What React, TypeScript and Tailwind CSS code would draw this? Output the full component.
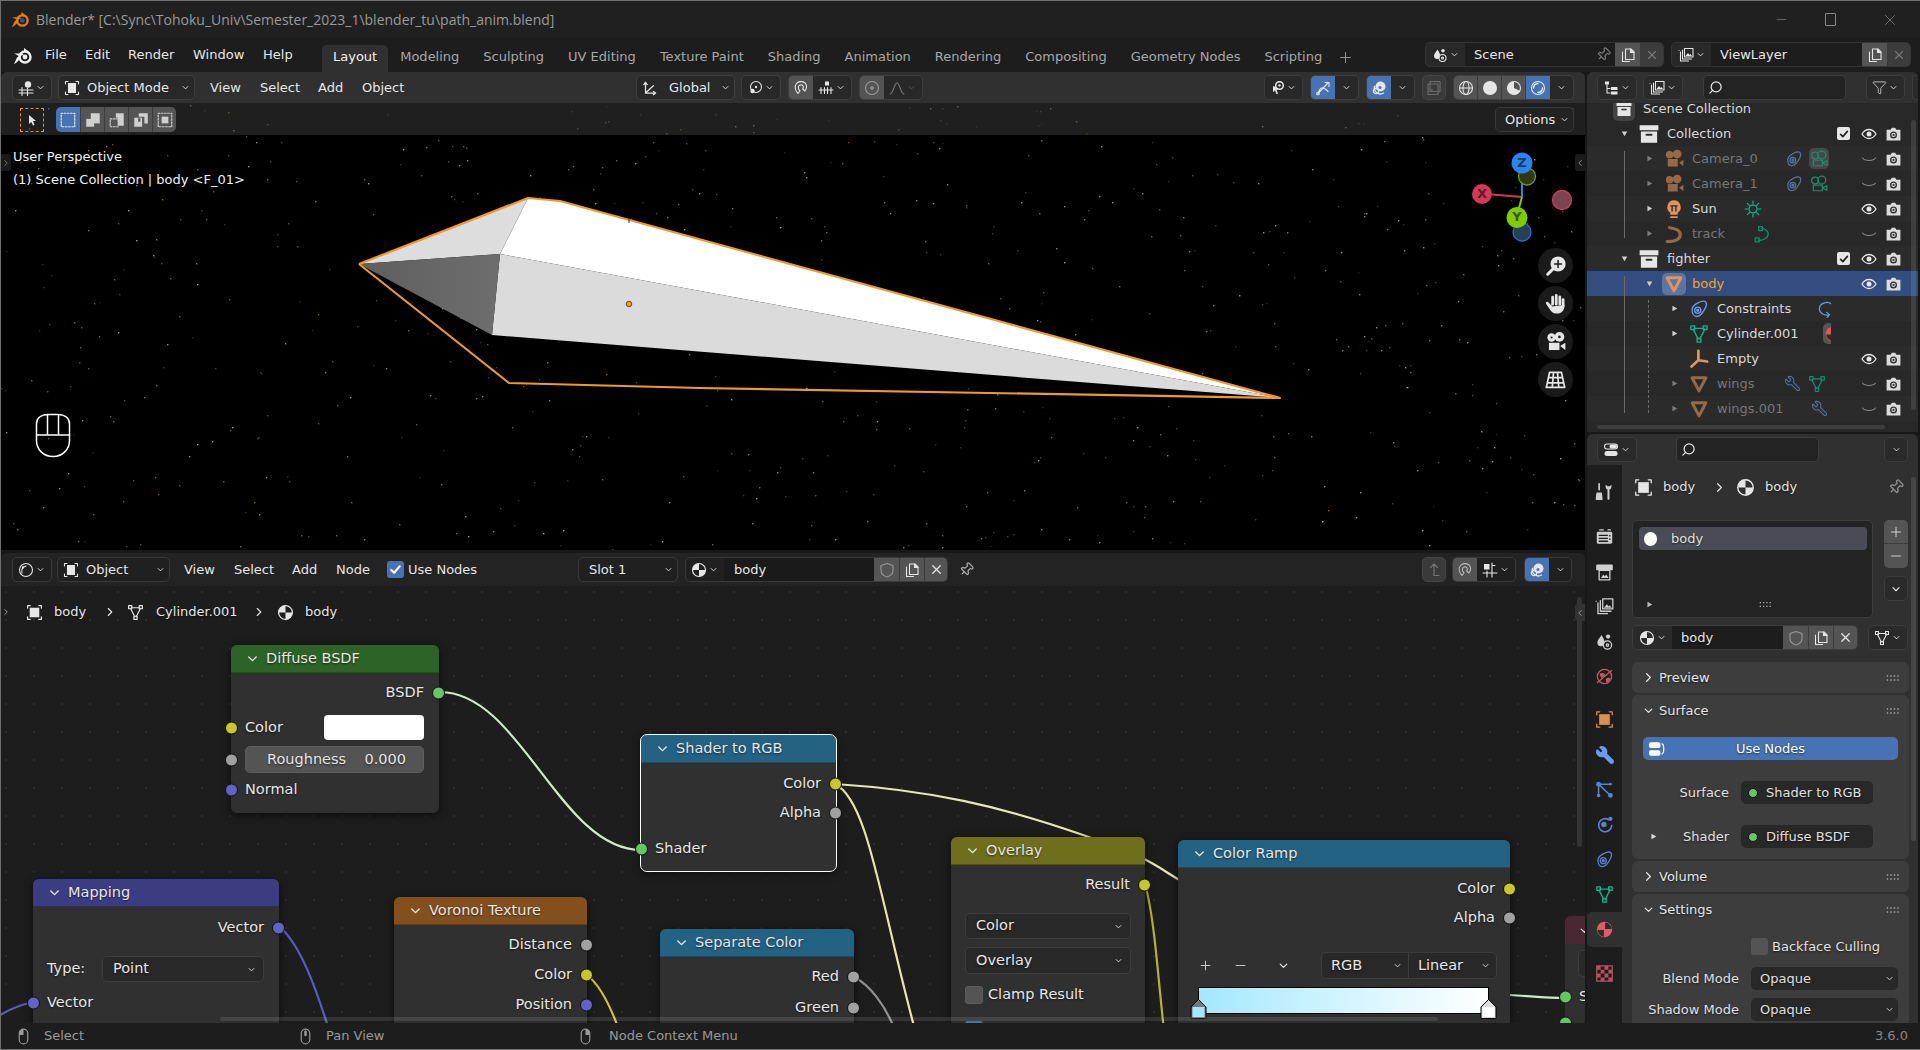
import React from "react";
import { Wrench, Pin, Search, Funnel, X, Plus, Minus } from "lucide-react";
import { twMerge } from "tailwind-merge";

const F = "currentColor";
const icons: Record<string, React.ReactNode> = {
  view3d: (<><path d="M1 10h14M1 13h14M4 7.500v8M9.500 8v7.500" /><circle cx="10" cy="4.500" r="3.200" fill={F} stroke="none" /></>),
  objmode: (<><path d="M1.500 4V1.500H4M12 1.500h2.500V4M14.500 12v2.500H12M4 14.500H1.500V12" /><rect x="4.500" y="3.500" width="7" height="9" fill={F} /></>),
  objsq: (<><path d="M1.500 4V1.500H4M12 1.500h2.500V4M14.500 12v2.500H12M4 14.500H1.500V12" /><rect x="3.500" y="3.500" width="9" height="9" fill={F} stroke="none" /></>),
  selset: <rect x="2" y="2" width="12" height="12" strokeDasharray="1.400 1.400" />,
  selext: (<><rect x="2" y="7" width="7" height="7" fill={F} stroke="none" /><rect x="6" y="2" width="8" height="9" fill={F} stroke="none" /></>),
  selsub: (<><rect x="2" y="7" width="7" height="7" strokeDasharray="1.400 1.400" /><path d="M7 2h7v11H9V6H7z" fill={F} stroke="none" /></>),
  seldif: (<><path d="M6 2h8v9h-3V5H6z" fill={F} stroke="none" /><path d="M2 6h7v8H2z" fill={F} stroke="none" /><rect x="5.500" y="6.500" width="2" height="3" fill="#545454" stroke="none" /></>),
  selint: (<><rect x="2" y="2" width="12" height="12" strokeDasharray="1.400 1.400" /><rect x="5" y="5" width="6" height="6" fill={F} stroke="none" /></>),
  cursor: <path d="M5 3l7 6H9l1.500 4-1.500.6L7.300 10 5 12z" fill={F} stroke="none" />,
  axes: (<><path d="M4 3v9.500h9M4 3L2.500 5M4 3l1.500 2M13 12.500L11 11M13 12.500L11 14M4 12.500L11 6" /></>),
  pivot: (<><circle cx="9" cy="7" r="5.500" /><circle cx="5.500" cy="11" r="2.200" fill={F} stroke="none" /><circle cx="9" cy="7" r="1.200" fill={F} stroke="none" /></>),
  magnet: <path d="M5 13.500l2-2.500C5.500 9.500 5 8 5.500 6.500 6.200 5 8 4.500 9.300 5.200c1.300.8 1.300 2.600.4 3.800l2.200 2C14 8.500 14.200 5 12 3 9.500 1 5.500 1.200 3.500 3.500 1.300 6.300 2 10.700 5 13.500z" />,
  snapinc: (<><rect x="7" y="1.500" width="4" height="4" fill={F} stroke="none" /><path d="M1 10h14M3 7.500v6M6.500 7.500v6M9.500 7.500v6M13 7.500v6" /></>),
  snapgrid: (<><rect x="2" y="2" width="5.500" height="5.500" fill={F} stroke="none" /><path d="M10 1v14M1 11h14M13 3.500H10M5 9v6" /></>),
  prop: (<><circle cx="8" cy="8" r="6.500" /><circle cx="8" cy="8" r="1.800" fill={F} stroke="none" /></>),
  falloff: <path d="M1 14c3.500 0 4-11 7-11s3.500 11 7 11" />,
  scene: (<><path d="M5.500 2.500C3.500 5.500 2 7 2 9c0 2 1.500 3 3 3 1 0 2-.5 2.500-1.500 1-2 .5-3 0-4.500z" fill={F} stroke="none" /><circle cx="11" cy="3.800" r="1.800" fill={F} stroke="none" /><circle cx="10.500" cy="11" r="3.500" /><circle cx="10.500" cy="11" r="1" /></>),
  layers: (<><path d="M2.500 5v9h8M1 3.500v0" /><path d="M4.500 3v9h9" /><rect x="6.500" y="1.500" width="8.500" height="8.500" /><path d="M7.500 9l2.500-3 1.500 2 1-1 1.500 2z" fill={F} stroke="none" /></>),
  dup: (<><path d="M2.500 5v9.500h7" /><path d="M5.500 2h5.500l3 3v7.500h-8.500z" /><path d="M10.500 2v3.500h3.500" fill={F} /></>),
  shield: <path d="M8 1.500l6 2v5c0 3-3 5.500-6 6.500-3-1-6-3.500-6-6.500v-5z" />,
  check: <path d="M3.500 8.500l3 3 6-7" strokeWidth="2.200" />,
  eye: (<><path d="M1 8s2.700-4.500 7-4.500S15 8 15 8s-2.700 4.500-7 4.500S1 8 1 8z" strokeWidth="1.300" /><circle cx="8" cy="8" r="2.500" fill={F} stroke="none" /></>),
  eyeoff: <path d="M1.500 7c2.500 3.300 10.500 3.300 13 0" />,
  snap: (<><path d="M1.500 4.500h3.800l1.200-2h3l1.200 2h3.800v10h-13z" fill={F} stroke="none" /><circle cx="8" cy="9.300" r="3.300" fill="#333" stroke="none" /><circle cx="8" cy="9.300" r="2" fill={F} stroke="none" /><circle cx="8" cy="9.300" r="1" fill="#333" stroke="none" /></>),
  coll: (<><rect x="0.500" y="1" width="15" height="4" fill={F} stroke="none" /><rect x="1.500" y="6" width="13" height="9" fill={F} stroke="none" /><path d="M6 8.500h4" stroke="#2b2b2b" strokeWidth="1.600" /></>),
  camobj: (<><circle cx="4.500" cy="4.500" r="3" fill={F} stroke="none" /><circle cx="10.500" cy="4" r="3.500" fill={F} stroke="none" /><rect x="3" y="8" width="8" height="6" fill={F} stroke="none" /><path d="M12 11l3.500-2.500v5z" fill={F} stroke="none" /></>),
  camdata: (<><circle cx="4.500" cy="4.800" r="3" /><circle cx="10.500" cy="4.500" r="3.500" /><rect x="3" y="9" width="8" height="5" /><path d="M12 11l3-1.500v4L12 12z" /></>),
  bulb: (<><path d="M8 1a5.500 5.500 0 0 0-3 10v1.500h6V11A5.500 5.500 0 0 0 8 1z" fill={F} stroke="none" /><path d="M5.500 14.500h5" strokeWidth="1.300" /><path d="M5.500 5.500h5M6.500 5.500v4M9.500 5.500v4" stroke="#2b2b2b" /></>),
  sun: (<><circle cx="8" cy="8" r="3.500" /><path d="M8 1v2.500M8 12.500V15M1 8h2.500M12.500 8H15M3 3l1.800 1.800M11.200 11.200L13 13M3 13l1.800-1.800M11.200 4.800L13 3" /></>),
  curve: <path d="M2.500 14C9 14 13 12 13 8.500 13 5.500 9 3.500 4.500 3" strokeWidth="2.600" />,
  curvedata: (<><path d="M4.500 13.500C9 14 13.500 11.500 13.500 8 13.500 5 10 3 7.500 3" /><rect x="2" y="11.500" width="3.500" height="3.500" /><rect x="5" y="1.500" width="3.500" height="3.500" /></>),
  meshobj: <path d="M2.500 3h11L8 13.500z" strokeWidth="2.400" />,
  meshdata: (<><path d="M4 3.500h8M3.500 4.500l3.800 7.500M12.500 4.500l-3.800 7.500" /><rect x="1.500" y="1.500" width="3" height="3" /><rect x="11.500" y="1.500" width="3" height="3" /><rect x="6.500" y="11.500" width="3" height="3" /></>),
  empty: <path d="M7.500 9V1.500M7.500 9L2 14M7.500 9l7 1" strokeWidth="2.200" />,
  constraint: (<><path d="M2.500 8.500C2.500 5 9 1.500 12 1.700c2.300.2 2.300 3 1.300 5C11.500 10.500 9.500 14 6 14 3.800 14 2.500 11.500 2.500 8.500z" /><circle cx="7" cy="9" r="2.500" /><circle cx="7" cy="9" r=".8" fill={F} /></>),
  conschild: <path d="M13.500 3.500C9.500.5 3 3 3 8c0 3.500 4 6 8 5.300M9.500 11l2.500 2-2 2.500" />,
  matall: (<><circle cx="8" cy="8" r="6.500" fill="none" strokeWidth="1.200" /><path d="M8 1.500A6.500 6.500 0 0 0 1.500 8H8zM8 8v6.500A6.500 6.500 0 0 0 14.500 8z" fill={F} stroke="none" /></>),
  matfull: (<><circle cx="8" cy="8" r="6.500" fill={F} stroke="none" /><path d="M8.500 2A6 6 0 0 1 14 7.500H8.500zM7.500 8.500V14A6 6 0 0 1 2 8.500z" fill="#2b2b2b" stroke="none" /></>),
  toolt: (<><path d="M3.500 1.500v5M1.800 9.500h3.400l.5 5h-4.400z" fill={F} strokeWidth="1.400" /><path d="M9 2v2.500c0 1 .8 1.800 1.500 1.800v8c0 .9 1.700.9 1.700 0v-8c.8 0 1.600-.8 1.600-1.800V2L12.500 3.500h-2z" fill={F} stroke="none" /></>),
  render: (<><rect x="1.500" y="4" width="13" height="10" rx="1.200" fill={F} stroke="none" /><path d="M4 2.500h3M11 2.500h2" /><path d="M3.500 7h7M3.500 9.500h7M3.500 12h7" stroke="#1d1d1d" /><path d="M12.500 7v.5M12.500 10v.5" stroke="#1d1d1d" /></>),
  output: (<><rect x="1" y="2" width="14" height="5" rx="1" fill={F} stroke="none" /><rect x="3.500" y="7" width="9" height="8" fill="#1d1d1d" stroke={F} /><path d="M5 13.500l2-3 1.300 1.500 1.200-1.500 2 3z" fill={F} stroke="none" /></>),
  worldt: (<><circle cx="8" cy="8" r="6" /><path d="M2 13L14 3" /><path d="M4 5.500c2-1 4-.5 4.500 1-.5 2-2 1-2.500 3-1-.5-2-2-2-4zM9 10c1-1 3-1.500 4-.5-.5 2-2 3.500-3.500 3.500z" fill={F} stroke="none" /></>),
  particles: (<><circle cx="3" cy="3.500" r="2" fill={F} stroke="none" /><circle cx="3" cy="13" r="1.500" fill={F} stroke="none" /><circle cx="13" cy="3.500" r="1.200" fill={F} stroke="none" /><circle cx="13" cy="13" r="2" fill={F} stroke="none" /><path d="M3 3.500v9M3 3.500h10M3 3.500l10 9.500" strokeWidth="1.300" /></>),
  physics: (<><path d="M11.500 4A5.500 5.500 0 1 0 14 9" strokeWidth="1.400" /><circle cx="7.500" cy="8" r="2.300" fill={F} stroke="none" /><circle cx="13" cy="3.200" r="1.800" fill={F} stroke="none" /></>),
  texture: (<><rect x="1.500" y="1.500" width="13" height="13" /><path d="M1.500 1.500h3.300v3.300H1.500zM8 1.500h3.300v3.300H8zM4.800 4.800H8V8H4.800zM11.300 4.800h3.200V8h-3.200zM1.500 8h3.300v3.300H1.500zM8 8h3.300v3.300H8zM4.800 11.300H8v3.200H4.800zM11.300 11.300h3.200v3.200h-3.200z" fill={F} stroke="none" /></>),
  toggle: (<><rect x="1.500" y="2" width="13" height="5" rx="2.500" fill="none" /><rect x="6.500" y="2.500" width="7.500" height="4" rx="2" fill={F} stroke="none" /><rect x="1.500" y="9" width="13" height="5" rx="2.500" fill={F} stroke="none" /></>),
  outmode: (<><rect x="2" y="1.500" width="4" height="3" fill={F} stroke="none" /><path d="M4 4.500v8.500h3M4 8.500h3" /><rect x="8" y="7" width="6.500" height="3" fill={F} stroke="none" /><rect x="8" y="11.500" width="6.500" height="3" fill={F} stroke="none" /></>),
  nodeed: (<><circle cx="8" cy="8" r="6.500" /><path d="M4 11c-.8-3.500.5-6 4-7" /><circle cx="5" cy="5.500" r=".6" fill={F} /></>),
  arrowup: <path d="M8 2L4.500 5.500M8 2l3.500 3.500M8 2v11.500h5" />,
  gizmo: (<><path d="M3 13.500L13 3M3 13.500c2-6 4-8 10-2" /><circle cx="3" cy="13.500" r="1.300" /><path d="M10 2.500h4v4" /></>),
  overlay: (<><circle cx="9.500" cy="6.500" r="5" fill={F} stroke="none" /><path d="M3.500 6.500a6 6 0 0 0 9 6.500" strokeWidth="1.400" /><circle cx="5" cy="11" r="2.700" fill="none" strokeWidth="1.200" /><circle cx="9" cy="7.500" r="1.500" fill="#4772b3" stroke="none" /></>),
  visib: (<><circle cx="9.500" cy="5.500" r="3.800" fill="none" strokeWidth="1.500" /><circle cx="9.500" cy="5.500" r="1.200" fill={F} stroke="none" /><path d="M3 6l6 2.500-2.500 1.200 1.500 4-1.500.6-1.500-4-2 2z" fill={F} stroke="none" /></>),
  xray: (<><rect x="4" y="1.500" width="10" height="10" /><rect x="2" y="4" width="10" height="10.500" /><path d="M6 9v1.500" /></>),
  wire: (<><circle cx="8" cy="8" r="6.500" /><ellipse cx="8" cy="8" rx="3" ry="6.500" /><path d="M1.500 8h13" /></>),
  solid: <circle cx="8" cy="8" r="7" fill={F} stroke="none" />,
  matprev: (<><circle cx="8" cy="8" r="6.500" /><path d="M8 1.500A6.500 6.500 0 0 0 8 14.500 6.500 6.500 0 0 0 14 11L8 8z" fill={F} stroke="none" /></>),
  rendered: (<><circle cx="8" cy="8" r="6.500" /><path d="M3.500 8A4.500 4.500 0 0 1 8 3.500M12.500 8A4.500 4.500 0 0 1 8 12.500" strokeWidth="1.400" /><circle cx="11" cy="11.500" r="1" fill={F} stroke="none" /></>),
  usenodes: (<><rect x="1" y="2" width="10" height="5" rx="1.500" fill={F} stroke="none" /><rect x="1" y="9" width="10" height="5" rx="1.500" fill={F} stroke="none" /><path d="M12.500 3.500c2 .5 2 8 0 9" /></>),
  mouseL: (<><rect x="4" y="1" width="8" height="14" rx="4" /><path d="M4 6.500V5a4 4 0 0 1 4-4v5.500z" fill={F} stroke="none" /></>),
  mouseM: (<><rect x="4" y="1" width="8" height="14" rx="4" /><path d="M8 3.500v3" strokeWidth="2.400" /></>),
  mouseR: (<><rect x="4" y="1" width="8" height="14" rx="4" /><path d="M12 6.500V5a4 4 0 0 0-4-4v5.500z" fill={F} stroke="none" /></>),
  camgizmo: (<><circle cx="5" cy="5" r="3.200" fill={F} stroke="none" /><circle cx="11" cy="4.500" r="3.700" fill={F} stroke="none" /><rect x="3" y="9" width="8" height="5.500" fill={F} stroke="none" /><path d="M11.500 11.500l4-2.500v5.500z" fill={F} stroke="none" /><circle cx="11" cy="4.500" r="1" fill="#1a1a1a" stroke="none" /><circle cx="5" cy="5" r=".8" fill="#1a1a1a" stroke="none" /></>),
  gridgizmo: <path d="M3.500 2.500h9L15 14H1zM6.500 2.500L5.500 14M9.500 2.500l1 11.500M2.700 6.500h10.600M1.700 10.500h12.600" strokeWidth="1.300" />,
  zoomin: (<><circle cx="9.500" cy="6.500" r="5.500" fill={F} stroke="none" /><path d="M9.500 4v5M7 6.500h5" stroke="#1a1a1a" strokeWidth="1.100" /><path d="M5.500 10.500l-3.500 3.500" strokeWidth="2.200" /></>),
  hand: (<><path d="M6 8.500V3.500M8.500 8.500V2.300M11 8.500V3.300M13.300 9.500V5.300" strokeWidth="1.900" /><path d="M4.800 7.500l.7 2.500 8.800-1c0 3.500-2 6-5.300 6-3 0-4.200-1.500-5.300-3.500L1.500 8.300c-.7-1.200.7-2 1.500-1.200l2 2.200z" fill={F} stroke="none" /></>),
  chev: <path d="M4.500 6.500L8 10l3.500-3.500" strokeWidth="1.300" />,
  chevr: <path d="M6 4l4 4-4 4" strokeWidth="1.300" />,
  chevl: <path d="M10 4L6 8l4 4" strokeWidth="1.300" />,
  triR: <path d="M5 4l7 4-7 4z" fill={F} stroke="none" />,
  triD: <path d="M4 5l4 7 4-7z" fill={F} stroke="none" />,
  grip: <path d="M2.500 6v.01M6 6v.01M9.500 6v.01M13 6v.01M2.500 10v.01M6 10v.01M9.500 10v.01M13 10v.01" strokeWidth="1.400" strokeLinecap="square" />,
};

function Ic({ n, s = 16, className = "" }: { n: string; s?: number; className?: string }) {
  return (
    <svg width={s} height={s} viewBox="0 0 16 16" fill="none" stroke="currentColor" strokeWidth={1.1} strokeLinecap="round" strokeLinejoin="round" className={"shrink-0 " + className}>
      {icons[n]}
    </svg>
  );
}

const Dd = ({ className = "" }: { className?: string }) => <Ic n="chev" s={11} className={className} />;

function BlenderLogo({ body, eye, s = 20 }: { body: string; eye: string; s?: number }) {
  return (
    <svg width={s} height={s * 0.85} viewBox="0 0 20 17" className="shrink-0">
      <circle cx="12" cy="10" r="5.500" fill="none" stroke={body} strokeWidth="2.400" />
      <circle cx="12" cy="10" r="2.400" fill={eye} />
      <path d="M11 1l6 4.500-3.500.3L11 4zM1 6.500h8.500l1.300 1.500L6 9zM4 10.500L8 8l-.5 3.500L3 16l-2 1z" fill={body} />
    </svg>
  );
}

// group of joined header buttons
function Grp({ className = "", children }: { className?: string; children: React.ReactNode }) {
  return <div className={twMerge("flex h-[25px] shrink-0 items-stretch overflow-hidden rounded-[5px] border border-[#3f3f3f] bg-[#282828] text-[#e6e6e6]", className)}>{children}</div>;
}
function Seg({ className = "", children }: { className?: string; children?: React.ReactNode }) {
  return <div className={"flex shrink-0 items-center justify-center " + className}>{children}</div>;
}

function Stars({ count, seed, x, y, w, h, dim = 1 }: { count: number; seed: number; x: number; y: number; w: number; h: number; dim?: number }) {
  const dots = React.useMemo(() => {
    let r = seed;
    const next = () => {
      r = (r * 16807) % 2147483647;
      return r / 2147483647;
    };
    const out: { x: number; y: number; c: string; o: number }[] = [];
    for (let i = 0; i < count; i++) {
      const t = next();
      out.push({
        x: x + next() * w,
        y: y + next() * h,
        c: t < 0.22 ? "#c98a3c" : t < 0.35 ? "#8c8cb0" : "#d0d0d0",
        o: (0.2 + next() * 0.55) * dim,
      });
    }
    return out;
  }, [count, seed, x, y, w, h, dim]);
  return (
    <>
      {dots.map((d, i) => (
        <rect key={i} x={Math.round(d.x)} y={Math.round(d.y)} width={1.4} height={1.4} fill={d.c} opacity={d.o} />
      ))}
    </>
  );
}

function GizmoBtn({ children, className = "" }: { children: React.ReactNode; className?: string }) {
  return <div className={"flex h-[35px] w-[35px] items-center justify-center rounded-full bg-[#1a1a1a] text-[#e6e6e6] " + className}>{children}</div>;
}

function Viewport3D() {
  return (
    <div className="flex h-[478px] w-full flex-col overflow-hidden rounded-t-[6px]">
      <div className="flex h-[31px] shrink-0 items-center bg-[#303030] text-[#e6e6e6]">
        <Grp className="ml-[11px] w-[40px]"><Seg className="flex-1 gap-[1px]"><Ic n="view3d" /><Dd /></Seg></Grp>
        <Grp className="ml-[6px] w-[137px]">
          <Seg className="w-[26px]"><Ic n="objmode" /></Seg>
          <span className="flex-1 pl-[2px] leading-[23px]">Object Mode</span>
          <Seg className="w-[18px]"><Dd /></Seg>
        </Grp>
        <span className="ml-[15px] w-[50px]">View</span>
        <span className="w-[58px]">Select</span>
        <span className="w-[44px]">Add</span>
        <span className="w-[50px]">Object</span>
        <Grp className="ml-[224px] w-[99px]">
          <Seg className="w-[26px]"><Ic n="axes" s={18} /></Seg>
          <span className="flex-1 pl-[6px] leading-[23px]">Global</span>
          <Seg className="w-[18px]"><Dd /></Seg>
        </Grp>
        <Grp className="ml-[6px] w-[40px]"><Seg className="flex-1 gap-[1px]"><Ic n="pivot" /><Dd /></Seg></Grp>
        <Grp className="ml-[7px] w-[64px]">
          <Seg className="w-[24px] bg-[#545454]"><Ic n="magnet" /></Seg>
          <Seg className="flex-1 gap-[1px]"><Ic n="snapinc" /><Dd /></Seg>
        </Grp>
        <Grp className="ml-[7px] w-[64px] text-[#9a9a9a]">
          <Seg className="w-[24px] bg-[#545454]"><Ic n="prop" /></Seg>
          <Seg className="flex-1 gap-[1px] text-[#777]"><Ic n="falloff" /><Dd className="text-[#555]" /></Seg>
        </Grp>
        <Grp className="ml-[341px] w-[39px] border-[#3a3a3a]"><Seg className="flex-1"><Ic n="visib" /><Dd /></Seg></Grp>
        <Grp className="ml-[7px] w-[49px]">
          <Seg className="w-[24px] bg-[#4772b3]"><Ic n="gizmo" /></Seg>
          <Seg className="flex-1"><Dd /></Seg>
        </Grp>
        <Grp className="ml-[7px] w-[49px]">
          <Seg className="w-[24px] bg-[#4772b3]"><Ic n="overlay" /></Seg>
          <Seg className="flex-1"><Dd /></Seg>
        </Grp>
        <Grp className="ml-[7px] w-[24px] border-[#454545] bg-[#3a3a3a] text-[#6e6e6e]"><Seg className="flex-1"><Ic n="xray" /></Seg></Grp>
        <Grp className="ml-[7px] w-[121px]">
          <Seg className="w-[24px] border-r border-[#3d3d3d] bg-[#545454]"><Ic n="wire" /></Seg>
          <Seg className="w-[24px] border-r border-[#3d3d3d] bg-[#545454]"><Ic n="solid" /></Seg>
          <Seg className="w-[24px] border-r border-[#3d3d3d] bg-[#545454]"><Ic n="matprev" /></Seg>
          <Seg className="w-[24px] bg-[#4772b3]"><Ic n="rendered" /></Seg>
          <Seg className="flex-1"><Dd /></Seg>
        </Grp>
      </div>
      <div className="relative flex h-[32px] shrink-0 items-center bg-[#1f1f1f] pt-[1px]">
        <svg className="absolute inset-0" width="1584" height="32" viewBox="1 103 1584 32"><Stars count={45} seed={77} x={1} y={105} w={1584} h={29} dim={0.6} /></svg>
        <div className="relative ml-[19px] flex h-[24px] w-[24px] items-center justify-center border border-dashed border-[#d9912b] text-[#e6e6e6]"><Ic n="cursor" /></div>
        <div className="relative ml-[12px] flex h-[25px] w-[120px] overflow-hidden rounded-[5px] text-[#e6e6e6]">
          <Seg className="w-[24px] bg-[#4772b3]"><Ic n="selset" s={18} /></Seg>
          <Seg className="w-[24px] border-l border-[#3d3d3d] bg-[#545454]"><Ic n="selext" s={18} className="text-[#d0d0d0]" /></Seg>
          <Seg className="w-[24px] border-l border-[#3d3d3d] bg-[#545454]"><Ic n="selsub" s={18} className="text-[#d0d0d0]" /></Seg>
          <Seg className="w-[24px] border-l border-[#3d3d3d] bg-[#545454]"><Ic n="seldif" s={18} className="text-[#d0d0d0]" /></Seg>
          <Seg className="w-[24px] border-l border-[#3d3d3d] bg-[#545454]"><Ic n="selint" s={18} className="text-[#d0d0d0]" /></Seg>
        </div>
        <Grp className="relative ml-auto mr-[11px] w-[79px] border-[#3a3a3a] bg-[#232323]">
          <span className="flex-1 pl-[9px] leading-[23px]">Options</span>
          <Seg className="w-[18px]"><Dd /></Seg>
        </Grp>
      </div>
      <div className="relative flex-1 overflow-hidden bg-black">
        <svg className="absolute inset-0" width="1584" height="415" viewBox="1 135 1584 415">
          <Stars count={640} seed={4242} x={1} y={135} w={1584} h={415} />
          <defs>
            <linearGradient id="nose" x1="0" x2="1" y1="0" y2="0">
              <stop offset="0" stopColor="#5e5e5e" />
              <stop offset="1" stopColor="#6e6e6e" />
            </linearGradient>
          </defs>
          <polygon points="528,198 560,201 1280,398 500,254" fill="#ffffff" />
          <polygon points="500,254 1280,398 492,335" fill="#dbdbdb" />
          <polygon points="359,264 528,198 500,254" fill="#dddddd" />
          <polygon points="359,264 500,254 492,335" fill="url(#nose)" />
          <polyline points="359,264 528,198 560,201 1280,398 700,388 509,383 359,264" fill="none" stroke="#f09a2a" strokeWidth="2.200" strokeLinejoin="round" />
          <circle cx="629" cy="304" r="2.800" fill="#f09a2a" stroke="#333" strokeWidth="0.800" />
          <path d="M629 218v5" stroke="#333" />
          <path d="M1492 194.500L1522 197" stroke="#d6385a" strokeWidth="2" />
          <path d="M1522 170V197" stroke="#2c84f0" strokeWidth="2" />
          <path d="M1522 197L1519 208" stroke="#7fcc00" strokeWidth="2" />
          <circle cx="1527" cy="176.500" r="8.500" fill="#2e3a17" stroke="#6f9a1c" strokeWidth="1.300" />
          <circle cx="1522" cy="232" r="9" fill="#263f5c" stroke="#2c6fc4" strokeWidth="1.300" />
          <circle cx="1562" cy="200" r="9.500" fill="#7a4450" stroke="#d6385a" strokeWidth="1.300" />
          <circle cx="1522" cy="163" r="10.500" fill="#2c84f0" />
          <circle cx="1482" cy="194" r="10" fill="#d6385a" />
          <circle cx="1517" cy="217.500" r="10.500" fill="#7fcc00" />
          <g fill="none" stroke="#fff" strokeWidth="1.500">
            <path d="M36.500 424v16.500c0 9 7 16 16.500 16s16.500-7 16.500-16V424c0-7-6-9.500-12-9.500H48.500c-6 0-12 2.500-12 9.500z" />
            <path d="M36.500 435h33M47.500 414.500V435M58.500 414.500V435" />
          </g>
        </svg>
        <div className="absolute left-[12px] top-[10px] leading-[23px] text-[#f2f2f2]">
          <div>User Perspective</div>
          <div>(1) Scene Collection | body &lt;F_01&gt;</div>
        </div>
        <div className="absolute left-0 top-[19px] flex h-[17px] w-[10px] items-center justify-center rounded-r-[3px] bg-[#1a1a1a] text-[#888]"><Ic n="chevr" s={10} /></div>
        <div className="absolute right-0 top-[19px] flex h-[17px] w-[10px] items-center justify-center rounded-l-[3px] bg-[#1a1a1a] text-[#aaa]"><Ic n="chevl" s={10} /></div>
        <div className="absolute left-[1511px] top-[16px] flex w-[20px] justify-center font-bold leading-[24px] text-[#1e3a5c]">Z</div>
        <div className="absolute left-[1471px] top-[47px] flex w-[20px] justify-center font-bold leading-[24px] text-[#5c1c2c]">X</div>
        <div className="absolute left-[1506px] top-[70px] flex w-[20px] justify-center font-bold leading-[24px] text-[#34520c]">Y</div>
        <div className="absolute left-[1537px] top-[113px] flex flex-col gap-[3px]">
          <GizmoBtn><Ic n="zoomin" s={22} /></GizmoBtn>
          <GizmoBtn><Ic n="hand" s={23} /></GizmoBtn>
          <GizmoBtn><Ic n="camgizmo" s={21} /></GizmoBtn>
          <GizmoBtn><Ic n="gridgizmo" s={21} /></GizmoBtn>
        </div>
      </div>
    </div>
  );
}

function Socket({ c, side }: { c: string; side: "l" | "r" }) {
  const pos = side === "l" ? "left-[-6px]" : "right-[-6px]";
  return <span className={"absolute top-1/2 h-[13px] w-[13px] -translate-y-1/2 rounded-full border border-[#111] " + pos + " " + c} />;
}

const Y = "bg-[#c7c729]";
const G = "bg-[#a1a1a1]";
const B = "bg-[#6363c7]";
const GR = "bg-[#63c763]";
const shadow = "[text-shadow:0_1px_2px_rgba(0,0,0,0.6)]";

function Row({ side, c, className = "", children }: { side?: "l" | "r"; c?: string; className?: string; children?: React.ReactNode }) {
  return (
    <div className={"relative flex items-center pl-[14px] pr-[15px] " + (side === "r" ? "justify-end " : "") + className}>
      {side && c && <Socket side={side} c={c} />}
      {children}
    </div>
  );
}

function Node({ title, head, className, selected, children }: { title: string; head: string; className: string; selected?: boolean; children?: React.ReactNode }) {
  return (
    <div className={"absolute rounded-[6px] bg-[#303030] text-[14.500px] text-[#e6e6e6] shadow-[0_2px_9px_rgba(0,0,0,0.65)] " + (selected ? "outline outline-[1.5px] outline-white " : "") + shadow + " " + className}>
      <div className={"flex h-[28px] items-center gap-[5px] rounded-t-[6px] border-b border-[#00000040] pl-[13px] " + head}>
        <Ic n="chev" s={17} />
        <span className="whitespace-nowrap">{title}</span>
      </div>
      {children}
    </div>
  );
}

function NodeDrop({ label, className = "" }: { label: string; className?: string }) {
  return (
    <div className={"flex items-center justify-between rounded-[5px] border border-[#3d3d3d] bg-[#282828] pl-[10px] pr-[6px] " + className}>
      <span>{label}</span>
      <Dd />
    </div>
  );
}

function RampStop({ body, fill, className }: { body: string; fill: string; className: string }) {
  return (
    <svg width="17" height="20" viewBox="0 0 17 20" className={"absolute top-[11px] " + className}>
      <polygon points="8.500,0.500 16,8 16,19.500 1,19.500 1,8" fill={body} stroke="#000" />
      <rect x="2.500" y="8" width="12" height="10" fill={fill} />
    </svg>
  );
}

function NodeEditor() {
  return (
    <div className="flex h-[470px] w-full flex-col overflow-hidden rounded-t-[6px] bg-[#1d1d1d]">
      <div className="flex h-[33px] shrink-0 items-center bg-[#232323] text-[#e6e6e6]">
        <Grp className="ml-[11px] w-[40px] border-[#3a3a3a] bg-[#202020]"><Seg className="flex-1 gap-[1px]"><Ic n="nodeed" /><Dd /></Seg></Grp>
        <Grp className="ml-[5px] w-[113px] border-[#3a3a3a] bg-[#202020]">
          <Seg className="w-[26px]"><Ic n="objmode" /></Seg>
          <span className="flex-1 pl-[2px] leading-[23px]">Object</span>
          <Seg className="w-[18px]"><Dd /></Seg>
        </Grp>
        <span className="ml-[14px] w-[50px]">View</span>
        <span className="w-[58px]">Select</span>
        <span className="w-[44px]">Add</span>
        <span className="w-[51px]">Node</span>
        <span className="flex h-[17px] w-[17px] items-center justify-center rounded-[3px] bg-[#4772b3] text-white"><Ic n="check" s={15} /></span>
        <span className="ml-[4px] w-[170px]">Use Nodes</span>
        <Grp className="w-[100px] border-[#3a3a3a] bg-[#202020]">
          <span className="flex-1 pl-[10px] leading-[23px]">Slot 1</span>
          <Seg className="w-[18px]"><Dd /></Seg>
        </Grp>
        <Grp className="ml-[7px] w-[263px] border-[#3a3a3a] bg-[#202020]">
          <Seg className="w-[38px] gap-[1px]"><Ic n="matall" /><Dd /></Seg>
          <span className="w-[150px] bg-[#1a1a1a] pl-[10px] leading-[23px]">body</span>
          <Seg className="w-[25px] bg-[#545454] text-[#999]"><Ic n="shield" /></Seg>
          <Seg className="w-[25px] border-l border-[#3d3d3d] bg-[#545454]"><Ic n="dup" /></Seg>
          <Seg className="flex-1 border-l border-[#3d3d3d] bg-[#545454]"><X size={15} /></Seg>
        </Grp>
        <Pin size={15} className="ml-[11px] rotate-45 text-[#aaa]" />
        <Grp className="ml-[448px] w-[24px] border-[#454545] bg-[#3a3a3a] text-[#777]"><Seg className="flex-1"><Ic n="arrowup" /></Seg></Grp>
        <Grp className="ml-[6px] w-[64px] border-[#3a3a3a] bg-[#202020]">
          <Seg className="w-[24px] bg-[#545454] text-[#bbb]"><Ic n="magnet" /></Seg>
          <Seg className="flex-1 gap-[1px]"><Ic n="snapgrid" /><Dd /></Seg>
        </Grp>
        <Grp className="ml-[8px] w-[48px] border-[#3a3a3a] bg-[#202020]">
          <Seg className="w-[24px] bg-[#4772b3]"><Ic n="overlay" /></Seg>
          <Seg className="flex-1"><Dd /></Seg>
        </Grp>
      </div>
      <div className="relative flex-1 overflow-hidden bg-[#1d1d1d] bg-[radial-gradient(#2b2b2b_1px,transparent_1.300px)] bg-[size:28px_28px] bg-[position:-9px_-8px]">
        <svg className="absolute inset-0" width="1584" height="437" viewBox="1 586 1584 437" fill="none" strokeLinecap="round">
          <path d="M440 692C520 692 560 850 641 850" stroke="#cfe9c6" strokeWidth="2.200" />
          <path d="M835 784C930 790 1000 806 1083 835S1150 865 1200 892" stroke="#e6e6b8" strokeWidth="2.200" />
          <path d="M835 784C868 800 880 900 915 1030" stroke="#e6e6a8" strokeWidth="2.200" />
          <path d="M1145 884C1155 920 1158 980 1164 1030" stroke="#b4b42a" strokeWidth="2.200" />
          <path d="M280 927C300 945 315 985 329 1030" stroke="#5a5ac4" strokeWidth="2.200" />
          <path d="M-5 1018C8 1010 20 1004 32 1003" stroke="#5a5ac4" strokeWidth="2.200" />
          <path d="M587 975C600 985 610 1005 619 1030" stroke="#c7c729" strokeWidth="2.200" />
          <path d="M854 977C870 985 885 1005 895 1030" stroke="#8f8f8f" strokeWidth="2.200" />
          <path d="M1510 995C1530 996 1545 998 1565 998" stroke="#cfe9c6" strokeWidth="2.200" />
        </svg>

        <div className={"absolute left-0 top-[15px] flex h-[22px] items-center text-[#e6e6e6] " + shadow}>
          <Ic n="chevr" s={10} className="text-[#bbb]" />
          <Ic n="objsq" s={17} className="ml-[15px]" />
          <span className="ml-[11px] w-[49px]">body</span>
          <Ic n="chevr" s={14} />
          <Ic n="meshdata" s={17} className="ml-[10px]" />
          <span className="ml-[12px] w-[96px]">Cylinder.001</span>
          <Ic n="chevr" s={14} />
          <Ic n="matall" s={17} className="ml-[11px]" />
          <span className="ml-[11px]">body</span>
        </div>

        <Node title="Diffuse BSDF" head="bg-[#2e6327]" className="left-[230px] top-[59px] h-[168px] w-[208px]">
          <Row side="r" c={GR} className="mt-[5px] h-[30px]">BSDF</Row>
          <Row side="l" c={Y} className="mt-[7px] h-[25px] justify-between">
            <span>Color</span>
            <span className="h-[25px] w-[100px] rounded-[4px] bg-white" />
          </Row>
          <Row side="l" c={G} className="mt-[6px] h-[27px]">
            <div className="flex h-[27px] w-full items-center rounded-[5px] border border-[#5d5d5d] bg-[#545454] pl-[21px] pr-[17px]">
              <span className="flex-1">Roughness</span>
              <span>0.000</span>
            </div>
          </Row>
          <Row side="l" c={B} className="mt-[4px] h-[26px]">Normal</Row>
        </Node>

        <Node title="Shader to RGB" head="bg-[#246283]" selected className="left-[640px] top-[149px] h-[136px] w-[195px]">
          <Row side="r" c={Y} className="mt-[8px] h-[26px]">Color</Row>
          <Row side="r" c={G} className="mt-[3px] h-[26px]">Alpha</Row>
          <Row side="l" c={GR} className="mt-[10px] h-[26px]">Shader</Row>
        </Node>

        <Node title="Mapping" head="bg-[#3c3c83]" className="left-[32px] top-[293px] h-[200px] w-[246px]">
          <Row side="r" c={B} className="mt-[8px] h-[26px]">Vector</Row>
          <Row className="mt-[15px] h-[26px]">
            <span className="w-[55px] shrink-0">Type:</span>
            <NodeDrop label="Point" className="h-[26px] w-[162px] shrink-0" />
          </Row>
          <Row side="l" c={B} className="mt-[8px] h-[26px]">Vector</Row>
        </Node>

        <Node title="Voronoi Texture" head="bg-[#83501d]" className="left-[393px] top-[311px] h-[180px] w-[193px]">
          <Row side="r" c={G} className="mt-[7px] h-[26px]">Distance</Row>
          <Row side="r" c={Y} className="mt-[4px] h-[26px]">Color</Row>
          <Row side="r" c={B} className="mt-[4px] h-[26px]">Position</Row>
        </Node>

        <Node title="Separate Color" head="bg-[#246283]" className="left-[659px] top-[343px] h-[150px] w-[194px]">
          <Row side="r" c={G} className="mt-[7px] h-[26px]">Red</Row>
          <Row side="r" c={G} className="mt-[5px] h-[26px]">Green</Row>
        </Node>

        <Node title="Overlay" head="bg-[#6e6e1d]" className="left-[950px] top-[251px] h-[220px] w-[194px]">
          <Row side="r" c={Y} className="mt-[7px] h-[26px]">Result</Row>
          <div className="mt-[15px] px-[14px]"><NodeDrop label="Color" className="h-[26px]" /></div>
          <div className="mt-[8px] px-[14px]"><NodeDrop label="Overlay" className="h-[27px]" /></div>
          <div className="mt-[12px] flex h-[18px] items-center gap-[5px] px-[14px]">
            <span className="h-[18px] w-[18px] rounded-[3px] border border-[#5d5d5d] bg-[#545454]" />
            <span>Clamp Result</span>
          </div>
          <div className="ml-[14px] mt-[17px] h-[18px] w-[18px] rounded-[3px] bg-[#4772b3]" />
        </Node>

        <Node title="Color Ramp" head="bg-[#246283]" className="left-[1177px] top-[254px] h-[220px] w-[332px]">
          <Row side="r" c={Y} className="mt-[8px] h-[26px]">Color</Row>
          <Row side="r" c={G} className="mt-[3px] h-[26px]">Alpha</Row>
          <div className="mt-[21px] flex h-[27px] items-center pl-[20px]">
            <Plus size={15} strokeWidth={1.300} />
            <Minus size={15} strokeWidth={1.300} className="ml-[20px]" />
            <Ic n="chev" s={15} className="ml-[28px]" />
            <div className="ml-[30px] flex h-[27px] w-[176px] rounded-[5px] border border-[#3d3d3d] bg-[#282828]">
              <div className="flex w-[87px] items-center justify-between border-r border-[#3d3d3d] pl-[9px] pr-[5px]"><span>RGB</span><Dd /></div>
              <div className="flex flex-1 items-center justify-between pl-[9px] pr-[5px]"><span>Linear</span><Dd /></div>
            </div>
          </div>
          <div className="relative ml-[20px] mt-[8px] h-[27px] w-[291px] border border-black bg-gradient-to-r from-[#a3e8ff] to-white">
            <RampStop body="#777" fill="#a3e8ff" className="left-[-9px]" />
            <RampStop body="#ddd" fill="#ffffff" className="right-[-9px]" />
          </div>
        </Node>

        <div className={"absolute left-[1564px] top-[330px] h-[120px] w-[40px] rounded-t-[6px] bg-[#303030] text-[14.500px] text-[#e6e6e6] " + shadow}>
          <div className="flex h-[28px] items-center rounded-t-[6px] bg-[#4a2833] pl-[12px]"><Ic n="chev" s={15} /></div>
          <div className="ml-[13px] mt-[6px] h-[27px] w-[20px] rounded-l-[5px] border border-[#3d3d3d] bg-[#282828]" />
          <Row side="l" c={GR} className="mt-[7px] h-[26px]">S</Row>
          <Row side="l" c={GR} className="mt-0 h-[26px]" />
        </div>

        <div className="absolute bottom-[2px] left-[219px] h-[4px] w-[1218px] rounded-full bg-white/10" />
        <div className="absolute left-[1576px] top-[11px] flex h-[250px] w-[5px] flex-col rounded-full bg-white/10" />
        <div className="absolute right-0 top-[18px] flex h-[17px] w-[10px] items-center justify-center rounded-l-[3px] bg-[#333] text-[#aaa]"><Ic n="chevl" s={10} /></div>
      </div>
    </div>
  );
}

type OutRow = { name: string; lv: number; icon: string; iconC: string; tri?: "r" | "d"; dim?: boolean; check?: boolean; eye?: boolean; cam?: boolean; sel?: boolean; extras?: { x: number; n: string; c: string; hi?: boolean }[] };

const outRows: OutRow[] = [
  { name: "Collection", lv: 0, icon: "coll", iconC: "text-[#e6e6e6]", tri: "d", check: true, eye: true, cam: true },
  { name: "Camera_0", lv: 1, icon: "camobj", iconC: "text-[#e0935a]", tri: "r", dim: true, cam: true, extras: [{ x: 1794, n: "constraint", c: "text-[#6c8fd6]" }, { x: 1819, n: "camdata", c: "text-[#1fb488]", hi: true }] },
  { name: "Camera_1", lv: 1, icon: "camobj", iconC: "text-[#e0935a]", tri: "r", dim: true, cam: true, extras: [{ x: 1794, n: "constraint", c: "text-[#6c8fd6]" }, { x: 1819, n: "camdata", c: "text-[#1fb488]" }] },
  { name: "Sun", lv: 1, icon: "bulb", iconC: "text-[#e0935a]", tri: "r", eye: true, cam: true, extras: [{ x: 1753, n: "sun", c: "text-[#0fb58a]" }] },
  { name: "track", lv: 1, icon: "curve", iconC: "text-[#e0935a]", tri: "r", dim: true, cam: true, extras: [{ x: 1762, n: "curvedata", c: "text-[#0fb58a]" }] },
  { name: "fighter", lv: 0, icon: "coll", iconC: "text-[#e6e6e6]", tri: "d", check: true, eye: true, cam: true },
  { name: "body", lv: 1, icon: "meshobj", iconC: "text-[#e0935a]", tri: "d", sel: true, eye: true, cam: true },
  { name: "Constraints", lv: 2, icon: "constraint", iconC: "text-[#6c9bea]", tri: "r", extras: [{ x: 1825, n: "conschild", c: "text-[#6c9bea]" }] },
  { name: "Cylinder.001", lv: 2, icon: "meshdata", iconC: "text-[#0fb58a]", tri: "r", extras: [{ x: 1833, n: "matfull", c: "text-[#e0555f]", hi: true }] },
  { name: "Empty", lv: 2, icon: "empty", iconC: "text-[#e0935a]", eye: true, cam: true },
  { name: "wings", lv: 2, icon: "meshobj", iconC: "text-[#e0935a]", tri: "r", dim: true, cam: true, extras: [{ x: 1792, n: "wrench", c: "text-[#6c8fd6]" }, { x: 1817, n: "meshdata", c: "text-[#0fb58a]" }] },
  { name: "wings.001", lv: 2, icon: "meshobj", iconC: "text-[#e0935a]", tri: "r", dim: true, cam: true, extras: [{ x: 1819, n: "wrench", c: "text-[#6c8fd6]" }] },
];

function OutlinerRow({ r, i }: { r: OutRow; i: number }) {
  const pad = 29 + r.lv * 25;
  const textX = 1587 + pad + 16 + 8 + 18 + 9;
  const nameW = r.extras ? r.extras[0].x - 10 - textX : undefined;
  return (
    <div className={"flex h-[25px] items-center " + (r.sel ? "bg-[#334d80]" : i % 2 ? "bg-[#2b2b2b]" : "bg-[#282828]")} style={{ paddingLeft: pad }}>
      <div className="flex w-[16px] justify-center text-[#cfcfcf]">
        {r.tri && <Ic n={r.tri === "r" ? "triR" : "triD"} s={11} className={r.dim ? "opacity-50" : ""} />}
      </div>
      <div className={"ml-[8px] flex h-[25px] w-[18px] items-center justify-center " + r.iconC + (r.dim ? " opacity-60" : "")}>
        {r.sel ? <span className="flex h-[22px] w-[24px] shrink-0 items-center justify-center rounded-[5px] bg-[#6f86ad]/70"><Ic n={r.icon} s={20} /></span> : <Ic n={r.icon} s={20} className="-mx-[1px]" />}
      </div>
      <div className="ml-[9px] flex items-center overflow-hidden" style={{ width: 1831 - textX }}>
        <span className={"shrink-0 whitespace-nowrap " + (r.sel ? "text-[#f5a623]" : r.dim ? "text-[#777]" : "text-[#d9d9d9]")} style={{ width: nameW }}>{r.name}</span>
        {r.extras?.map((e) => (
          <span key={e.n} className={"mr-[5px] flex h-[21px] w-[20px] shrink-0 items-center justify-center rounded-[5px] " + (e.hi ? "bg-[#555] " : "") + e.c + (r.dim ? " opacity-70" : "")}>
            {e.n === "wrench" ? <Wrench size={17} strokeWidth={1.500} className="-scale-x-100" /> : <Ic n={e.n} s={18} />}
          </span>
        ))}
      </div>
      <div className="flex w-[25px] justify-center">
        {r.check && <span className="flex h-[13px] w-[13px] items-center justify-center rounded-[2px] bg-[#e6e6e6] text-[#222]"><Ic n="check" s={12} /></span>}
      </div>
      <div className="flex w-[25px] justify-center text-[#e6e6e6]">
        {r.eye && <Ic n="eye" />}
        {!r.eye && r.cam && <Ic n="eyeoff" className="text-[#8a8a8a]" />}
      </div>
      <div className="flex w-[25px] justify-center text-[#dcdcdc]">{r.cam && <Ic n="snap" s={17} />}</div>
    </div>
  );
}

function Outliner() {
  return (
    <div className="relative flex h-[360px] flex-col overflow-hidden rounded-t-[6px] bg-[#282828]">
      <div className="z-10 flex h-[31px] shrink-0 items-center bg-[#303030] text-[#e6e6e6]">
        <Grp className="ml-[10px] w-[40px] border-[#3d3d3d] bg-[#2a2a2a]"><Seg className="flex-1 gap-[1px]"><Ic n="outmode" /><Dd /></Seg></Grp>
        <Grp className="ml-[6px] w-[40px] border-[#3d3d3d] bg-[#2a2a2a]"><Seg className="flex-1 gap-[1px]"><Ic n="layers" /><Dd /></Seg></Grp>
        <div className="ml-[20px] flex h-[25px] w-[143px] items-center rounded-[5px] border border-[#3d3d3d] bg-[#232323] pl-[4px]"><Search size={15} className="-scale-x-100" /></div>
        <Grp className="ml-[20px] w-[39px] border-[#3d3d3d] bg-[#2a2a2a]"><Seg className="flex-1 gap-[1px]"><Funnel size={15} strokeWidth={1.200} /><Dd /></Seg></Grp>
        <span className="ml-[7px] h-[25px] w-[6px] rounded-l-[4px] border border-r-0 border-[#3d3d3d] bg-[#2a2a2a]" />
      </div>
      <div className="-mt-[7px] flex flex-col overflow-hidden">
        <div className="flex h-[25px] items-center bg-[#282828] pl-[26px]">
          <span className="flex h-[24px] w-[22px] items-center justify-center rounded-[5px] bg-[#555]/60 text-[#e6e6e6]"><Ic n="coll" s={16} /></span>
          <span className="ml-[8px] text-[#d9d9d9]">Scene Collection</span>
        </div>
        {outRows.map((r, i) => <OutlinerRow key={r.name} r={r} i={i} />)}
      </div>
      <span className="absolute left-[37px] top-[79px] h-[87px] w-px bg-[#6a6a6a]" />
      <span className="absolute left-[37px] top-[204px] h-[137px] w-px bg-[#6a6a6a]" />
      <span className="absolute left-[61px] top-[228px] h-[113px] w-0 border-l border-dashed border-[#6a6a6a]" />
      <span className="absolute left-[324px] top-[48px] h-[290px] w-[5px] rounded-full bg-white/10" />
      <span className="absolute bottom-[3px] left-[10px] h-[4px] w-[288px] rounded-full bg-white/10" />
    </div>
  );
}

function TabIc({ n, c, active, className = "" }: { n: string; c: string; active?: boolean; className?: string }) {
  return (
    <div className={"flex h-[35px] w-[35px] items-center justify-center " + (active ? "rounded-l-[5px] bg-[#303030] " : "") + c + " " + className}>
      {n === "wrench" ? <Wrench size={20} fill="currentColor" strokeWidth={1.500} className="-scale-x-100" /> : <Ic n={n} s={19} />}
    </div>
  );
}

function PanelHead({ open, title }: { open?: boolean; title: string }) {
  return (
    <div className="flex h-[31px] items-center pl-[9px] pr-[8px] text-[#e6e6e6]">
      <Ic n={open ? "chev" : "chevr"} s={15} />
      <span className="ml-[3px] flex-1">{title}</span>
      <Ic n="grip" s={16} className="text-[#aaa]" />
    </div>
  );
}

function Properties() {
  return (
    <div className={"relative flex h-[589px] flex-col overflow-hidden rounded-t-[6px] bg-[#303030] " + shadow}>
      <div className="flex h-[31px] shrink-0 items-center text-[#e6e6e6]">
        <Grp className="ml-[10px] w-[40px] border-[#3d3d3d] bg-[#2a2a2a]"><Seg className="flex-1 gap-[1px]"><Ic n="toggle" /><Dd /></Seg></Grp>
        <div className="ml-[39px] flex h-[25px] w-[143px] items-center rounded-[5px] border border-[#3d3d3d] bg-[#232323] pl-[4px]"><Search size={15} className="-scale-x-100" /></div>
        <Grp className="ml-[65px] w-[24px] border-[#3d3d3d] bg-[#2a2a2a]"><Seg className="flex-1"><Dd /></Seg></Grp>
      </div>
      <div className="flex min-h-0 flex-1">
        <div className="w-[35px] shrink-0 bg-[#1d1d1d]">
          <TabIc n="toolt" c="text-[#cfcfcf]" className="mt-[9px]" />
          <TabIc n="render" c="text-[#cfcfcf]" className="mt-[10px]" />
          <TabIc n="output" c="text-[#cfcfcf]" />
          <TabIc n="layers" c="text-[#cfcfcf]" />
          <TabIc n="scene" c="text-[#cfcfcf]" />
          <TabIc n="worldt" c="text-[#c05a65]" />
          <TabIc n="objsq" c="text-[#d88f50]" className="mt-[8px]" />
          <TabIc n="wrench" c="text-[#6c9bea]" />
          <TabIc n="particles" c="text-[#5b82cc]" />
          <TabIc n="physics" c="text-[#5b82cc]" />
          <TabIc n="constraint" c="text-[#5b82cc]" />
          <TabIc n="meshdata" c="text-[#12b58c]" />
          <TabIc n="matfull" c="text-[#d85e6a]" active />
          <TabIc n="texture" c="text-[#b5525e]" className="mt-[9px]" />
        </div>
        <div className="w-[296px] shrink-0 pl-[10px] text-[#e0e0e0]">
          <div className="flex h-[44px] items-center">
            <Ic n="objsq" s={19} className="ml-[2px] text-[#e6e6e6]" />
            <span className="ml-[10px] w-[49px]">body</span>
            <Ic n="chevr" s={15} />
            <Ic n="matall" s={19} className="ml-[9px] text-[#e6e6e6]" />
            <span className="ml-[10px]">body</span>
            <Pin size={16} className="ml-[91px] rotate-45 text-[#8f8f8f]" />
          </div>
          <div className="mt-[11px] flex">
            <div className="h-[98px] w-[241px] rounded-[5px] border border-[#3d3d3d] bg-[#232323] pl-[6px] pt-[6px]">
              <div className="flex h-[23px] w-[228px] items-center rounded-[4px] bg-[#4a4b54] pl-[5px]">
                <span className="h-[14px] w-[13px] rounded-full bg-white blur-[0.7px]" />
                <span className="ml-[14px]">body</span>
              </div>
              <div className="mt-[47px] flex items-center">
                <Ic n="triR" s={11} className="ml-[5px] text-[#bbb]" />
                <Ic n="grip" s={15} className="ml-[103px] text-[#aaa]" />
              </div>
            </div>
            <div className="ml-[11px] flex w-[24px] flex-col">
              <div className="overflow-hidden rounded-[5px]">
                <div className="flex h-[24px] items-center justify-center border-b border-[#3d3d3d] bg-[#545454]"><Plus size={16} strokeWidth={1.300} /></div>
                <div className="flex h-[24px] items-center justify-center bg-[#545454]"><Minus size={16} strokeWidth={1.300} /></div>
              </div>
              <Grp className="mt-[8px] w-[24px] border-[#3d3d3d] bg-[#2a2a2a]"><Seg className="flex-1"><Ic n="chev" s={14} /></Seg></Grp>
            </div>
          </div>
          <div className="mt-[7px] flex">
            <Grp className="w-[226px] border-[#3d3d3d] bg-[#2a2a2a]">
              <Seg className="w-[39px] gap-[1px]"><Ic n="matall" /><Dd /></Seg>
              <span className="w-[111px] bg-[#1d1d1d] pl-[9px] leading-[23px]">body</span>
              <Seg className="w-[25px] bg-[#545454] text-[#999]"><Ic n="shield" /></Seg>
              <Seg className="w-[25px] border-l border-[#3d3d3d] bg-[#545454]"><Ic n="dup" /></Seg>
              <Seg className="flex-1 border-l border-[#3d3d3d] bg-[#545454]"><X size={15} /></Seg>
            </Grp>
            <Grp className="ml-[10px] w-[40px] border-[#3d3d3d] bg-[#2a2a2a]"><Seg className="flex-1 gap-[1px]"><Ic n="meshdata" /><Dd /></Seg></Grp>
          </div>
          <div className="mt-[12px] flex w-[277px] flex-col gap-[2px]">
            <div className="rounded-[6px] bg-[#3d3d3d]"><PanelHead title="Preview" /></div>
            <div className="h-[164px] rounded-[6px] bg-[#3d3d3d]">
              <PanelHead open title="Surface" />
              <div className="ml-[11px] mt-[11px] flex h-[23px] w-[255px] items-center rounded-[5px] bg-[#4772b3] text-white">
                <Ic n="usenodes" s={18} className="ml-[5px]" />
                <span className="flex-1 pr-[23px] text-center">Use Nodes</span>
              </div>
              <div className="mt-[21px] flex h-[23px] items-center">
                <span className="w-[97px] text-right">Surface</span>
                <div className="ml-[12px] flex h-[23px] w-[132px] items-center rounded-[5px] bg-[#282828]">
                  <span className="ml-[7px] h-[10px] w-[10px] rounded-full border border-[#111] bg-[#63c763]" />
                  <span className="ml-[8px]">Shader to RGB</span>
                </div>
              </div>
              <div className="mt-[21px] flex h-[23px] items-center">
                <div className="flex w-[97px] items-center justify-between pl-[16px]">
                  <Ic n="triR" s={11} className="text-[#ddd]" />
                  <span>Shader</span>
                </div>
                <div className="ml-[12px] flex h-[23px] w-[132px] items-center rounded-[5px] bg-[#282828]">
                  <span className="ml-[7px] h-[10px] w-[10px] rounded-full border border-[#111] bg-[#63c763]" />
                  <span className="ml-[8px]">Diffuse BSDF</span>
                </div>
              </div>
            </div>
            <div className="rounded-[6px] bg-[#3d3d3d]"><PanelHead title="Volume" /></div>
            <div className="h-[140px] rounded-[6px] bg-[#3d3d3d]">
              <PanelHead open title="Settings" />
              <div className="ml-[119px] mt-[13px] flex h-[17px] items-center gap-[4px]">
                <span className="h-[17px] w-[17px] rounded-[3px] bg-[#545454]" />
                <span>Backface Culling</span>
              </div>
              <div className="mt-[12px] flex h-[23px] items-center">
                <span className="w-[107px] text-right">Blend Mode</span>
                <div className="ml-[12px] flex h-[23px] w-[147px] items-center justify-between rounded-[5px] bg-[#282828] pl-[9px] pr-[3px]"><span>Opaque</span><Dd /></div>
              </div>
              <div className="mt-[8px] flex h-[23px] items-center">
                <span className="w-[107px] text-right">Shadow Mode</span>
                <div className="ml-[12px] flex h-[23px] w-[147px] items-center justify-between rounded-[5px] bg-[#282828] pl-[9px] pr-[3px]"><span>Opaque</span><Dd /></div>
              </div>
            </div>
          </div>
        </div>
      </div>
      <span className="absolute left-[324px] top-[43px] h-[364px] w-[5px] rounded-full bg-white/10" />
    </div>
  );
}

export default function App() {
  const tabs = ["Modeling", "Sculpting", "UV Editing", "Texture Paint", "Shading", "Animation", "Rendering", "Compositing", "Geometry Nodes", "Scripting"];
  return (
    <div className="flex h-[1050px] w-[1920px] flex-col overflow-hidden border border-r-0 border-[#6e6e6e] bg-[#181818] font-['DejaVu_Sans',sans-serif] text-[13px] text-[#e6e6e6]">
      <div className="flex h-[37px] shrink-0 items-center bg-[#202020] font-['Open_Sans',sans-serif] text-[14px] text-[#9a9a9a]">
        <span className="ml-[10px]"><BlenderLogo body="#e87d0d" eye="#265787" s={19} /></span>
        <span className="ml-[6px]">Blender* [C:\Sync\Tohoku_Univ\Semester_2023_1\blender_tu\path_anim.blend]</span>
        <Minus size={15} strokeWidth={1} className="ml-auto mr-[36px] text-[#888]" />
        <span className="mr-[45px] h-[13px] w-[11px] rounded-[1px] border border-[#888]" />
        <X size={18} strokeWidth={1} className="mr-[21px] text-[#888]" />
      </div>
      <div className="flex h-[34px] shrink-0 items-start bg-[#1d1d1d]">
        <div className="flex h-[34px] items-center text-[#e6e6e6]">
          <span className="ml-[12px] w-[32px]"><BlenderLogo body="#f0f0f0" eye="#f0f0f0" s={20} /></span>
          <span className="w-[40px]">File</span>
          <span className="w-[43px]">Edit</span>
          <span className="w-[65px]">Render</span>
          <span className="w-[70px]">Window</span>
          <span className="w-[59px]">Help</span>
        </div>
        <div className="mt-[7px] flex h-[27px] items-center rounded-t-[5px] bg-[#303030] px-[11px] pb-[3px] text-[#f0f0f0]">Layout</div>
        <div className="mt-[7px] flex h-[27px] items-center pb-[3px] text-[#a8a8a8]">
          {tabs.map((t) => <span key={t} className="px-[12px]">{t}</span>)}
          <Plus size={17} strokeWidth={1.200} className="ml-[3px]" />
        </div>
        <Grp className="ml-auto mt-[4px] w-[239px] border-[#353535] bg-[#282828]">
          <Seg className="w-[39px] gap-[1px]"><Ic n="scene" /><Dd /></Seg>
          <div className="flex w-[150px] items-center justify-between bg-[#1d1d1d] pl-[9px] pr-[4px]"><span>Scene</span><Pin size={15} className="rotate-45 text-[#777]" /></div>
          <Seg className="w-[25px] bg-[#545454]"><Ic n="dup" /></Seg>
          <Seg className="flex-1 bg-[#3c3c3c] text-[#777]"><X size={14} /></Seg>
        </Grp>
        <Grp className="ml-[7px] mr-[9px] mt-[4px] w-[240px] border-[#353535] bg-[#282828]">
          <Seg className="w-[39px] gap-[1px]"><Ic n="layers" /><Dd /></Seg>
          <div className="flex w-[151px] items-center bg-[#1d1d1d] pl-[9px]">ViewLayer</div>
          <Seg className="w-[25px] bg-[#545454]"><Ic n="dup" /></Seg>
          <Seg className="flex-1 bg-[#3c3c3c] text-[#777]"><X size={14} /></Seg>
        </Grp>
      </div>
      <div className="flex min-h-0 flex-1 gap-[2px]">
        <div className="flex w-[1584px] shrink-0 flex-col gap-[3px]">
          <Viewport3D />
          <NodeEditor />
        </div>
        <div className="flex w-[331px] shrink-0 flex-col gap-[2px]">
          <Outliner />
          <Properties />
        </div>
      </div>
      <div className="flex h-[26px] shrink-0 items-center bg-[#1d1d1d] text-[#999]">
        <Ic n="mouseL" s={17} className="ml-[14px]" />
        <span className="ml-[12px] w-[253px]">Select</span>
        <Ic n="mouseM" s={17} />
        <span className="ml-[12px] w-[251px]">Pan View</span>
        <Ic n="mouseR" s={17} />
        <span className="ml-[15px]">Node Context Menu</span>
        <span className="ml-auto mr-[12px] text-[#888]">3.6.0</span>
      </div>
    </div>
  );
}
